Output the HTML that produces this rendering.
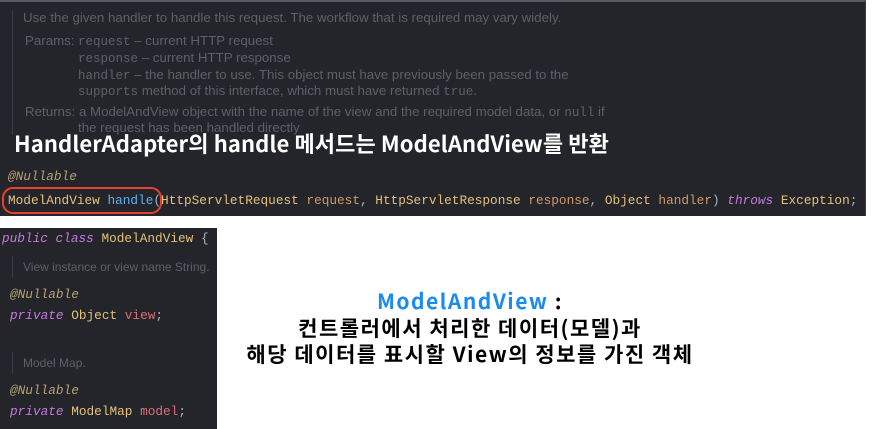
<!DOCTYPE html>
<html><head><meta charset="utf-8"><style>
body{margin:0;width:876px;height:429px;background:#fff;position:relative;overflow:hidden;font-family:"Liberation Sans","Noto Sans CJK KR",sans-serif}
.p{position:absolute;background:#23252b}
.t{position:absolute;white-space:pre;line-height:1}
.doc{color:#5d6068;font-size:13.3px}
.m{font-family:"Liberation Mono",monospace;font-size:12.75px;color:#e6c07b}
.k{color:#c678dd;font-style:italic}
.a{color:#b8a070;font-style:italic}
.b{color:#61afef}
.o{color:#d19a66}
.w{color:#abb2bf}
.cap{font-weight:bold;font-family:"Noto Sans CJK KR","Liberation Sans",sans-serif}
</style></head><body>
<div class="p" style="left:0;top:0;width:866px;height:216px;border-top:2px solid #55585e;border-right:1px solid #3a3d44;box-sizing:border-box"></div>
<div style="position:absolute;left:12px;top:10px;width:1px;height:125px;background:#3a3d44"></div>
<div class="t doc" style="left:23px;top:11px">Use the given handler to handle this request. The workflow that is required may vary widely.</div>
<div class="t doc" style="left:25px;top:34px">Params:</div>
<div class="t doc" style="left:78px;top:34px"><span style="font-family:'Liberation Mono',monospace;font-size:12.5px">request</span> – current HTTP request</div>
<div class="t doc" style="left:78px;top:51px"><span style="font-family:'Liberation Mono',monospace;font-size:12.5px">response</span> – current HTTP response</div>
<div class="t doc" style="left:78px;top:68px"><span style="font-family:'Liberation Mono',monospace;font-size:12.5px">handler</span> – the handler to use. This object must have previously been passed to the</div>
<div class="t doc" style="left:78px;top:84px"><span style="font-family:'Liberation Mono',monospace;font-size:12.5px">supports</span> method of this interface, which must have returned <span style="font-family:'Liberation Mono',monospace;font-size:12.5px">true</span>.</div>
<div class="t doc" style="left:25px;top:105px">Returns: a ModelAndView object with the name of the view and the required model data, or <span style="font-family:'Liberation Mono',monospace;font-size:12.5px">null</span> if</div>
<div class="t doc" style="left:78px;top:121px">the request has been handled directly</div>
<div class="t cap" style="left:14px;top:132px;font-size:22px;letter-spacing:0.1px;color:#fff">HandlerAdapter의 handle 메서드는 ModelAndView를 반환</div>
<div class="t m a" style="left:8px;top:171px">@Nullable</div>
<div class="t m" style="left:8px;top:195px">ModelAndView <span class="b">handle</span><span class="w">(</span>HttpServletRequest <span class="o">request</span><span class="w">,</span> HttpServletResponse <span class="o">response</span><span class="w">,</span> Object <span class="o">handler</span><span class="w">)</span> <span class="k">throws</span> Exception<span class="w">;</span></div>
<div style="position:absolute;left:2px;top:187px;width:160px;height:27px;border:2px solid #e8402e;border-radius:11px;box-sizing:border-box"></div>

<div class="p" style="left:0;top:228px;width:217px;height:201px"></div>
<div class="t m" style="left:2px;top:233px"><span class="k">public class</span> ModelAndView <span class="w">{</span></div>
<div style="position:absolute;left:12px;top:256px;width:1px;height:22px;background:#3a3d44"></div>
<div class="t doc" style="left:23px;top:261px;font-size:12px">View instance or view name String.</div>
<div class="t m a" style="left:10px;top:289px">@Nullable</div>
<div class="t m" style="left:10px;top:310px"><span class="k">private</span> Object <span style="color:#e06c75">view</span><span class="w">;</span></div>
<div style="position:absolute;left:12px;top:352px;width:1px;height:22px;background:#3a3d44"></div>
<div class="t doc" style="left:23px;top:357px;font-size:12px">Model Map.</div>
<div class="t m a" style="left:10px;top:385px">@Nullable</div>
<div class="t m" style="left:10px;top:406px"><span class="k">private</span> ModelMap <span style="color:#e06c75">model</span><span class="w">;</span></div>

<div class="cap" style="position:absolute;left:170px;width:600px;top:288px;text-align:center;font-size:21px;letter-spacing:1.5px;line-height:26.5px;color:#000">
<div><span style="color:#1a8cf0">ModelAndView</span> :</div>
<div>컨트롤러에서 처리한 데이터(모델)과</div>
<div>해당 데이터를 표시할 View의 정보를 가진 객체</div>
</div>
</body></html>
